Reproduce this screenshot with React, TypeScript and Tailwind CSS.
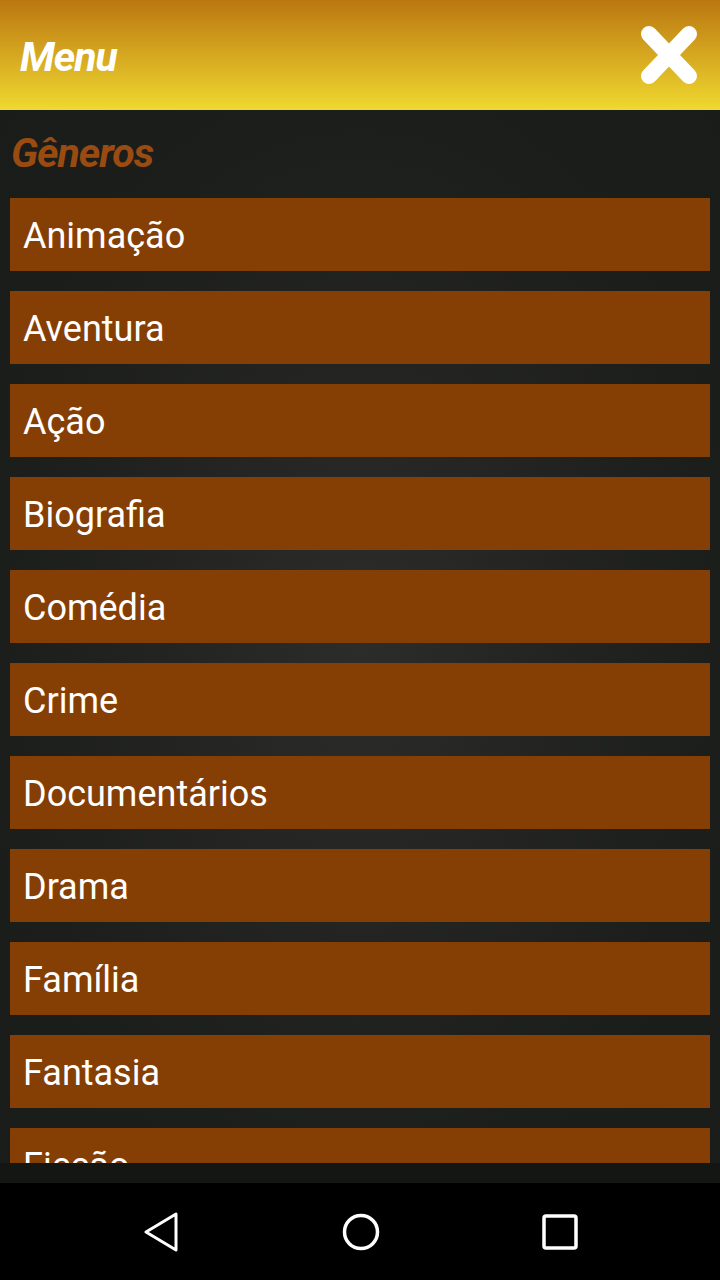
const GENRES = [
  'Animação',
  'Aventura',
  'Ação',
  'Biografia',
  'Comédia',
  'Crime',
  'Documentários',
  'Drama',
  'Família',
  'Fantasia',
  'Ficção',
]

function CloseIcon() {
  return (
    <svg width="58" height="60" viewBox="0 0 58 60">
      <path d="M9 9 L49 51 M49 9 L9 51" stroke="#fff" strokeWidth="16" strokeLinecap="round" />
    </svg>
  )
}

function NavBar() {
  return (
    <div className="h-[97px] bg-black flex items-center justify-between pl-[141px] pr-[140px]">
      <svg width="40" height="40" viewBox="0 0 40 40">
        <path d="M35 2 L35 38 L5 20 Z" fill="none" stroke="#fff" strokeWidth="3" strokeLinejoin="round" />
      </svg>
      <svg width="40" height="40" viewBox="0 0 40 40">
        <circle cx="20" cy="20" r="16.5" fill="none" stroke="#fff" strokeWidth="3.5" />
      </svg>
      <svg width="40" height="40" viewBox="0 0 40 40">
        <rect x="4" y="4" width="32" height="32" rx="2" fill="none" stroke="#fff" strokeWidth="3.5" />
      </svg>
    </div>
  )
}

export default function App() {
  return (
    <div className="w-[720px] h-[1280px] flex flex-col font-['Roboto',sans-serif] overflow-hidden">
      <header className="h-[110px] shrink-0 bg-gradient-to-b from-[#ba7710] to-[#efd930] flex items-center justify-between pl-[20px] pr-[22px]">
        <span className="text-white text-[41px] font-bold italic tracking-[-1px] mt-[6px]">Menu</span>
        <CloseIcon />
      </header>
      <main className="flex-1 flex flex-col bg-[radial-gradient(ellipse_at_center,#2c2c2b_0%,#1c1e1b_70%,#1a1c19_100%)]">
        <div className="h-[1053px] overflow-hidden">
          <div className="h-[88px] flex items-center pl-[11px]">
            <span className="text-[#9a4b12] text-[41px] font-bold italic tracking-[-1px]">Gêneros</span>
          </div>
          <div className="flex flex-col gap-[20px] px-[10px]">
            {GENRES.map((g) => (
              <div key={g} className="h-[73px] shrink-0 bg-[#853e04] flex items-center pl-[13px]">
                <span className="text-white text-[36px] leading-none mt-[3px]">{g}</span>
              </div>
            ))}
          </div>
        </div>
        <div className="flex-1 bg-[#141614]" />
      </main>
      <NavBar />
    </div>
  )
}
